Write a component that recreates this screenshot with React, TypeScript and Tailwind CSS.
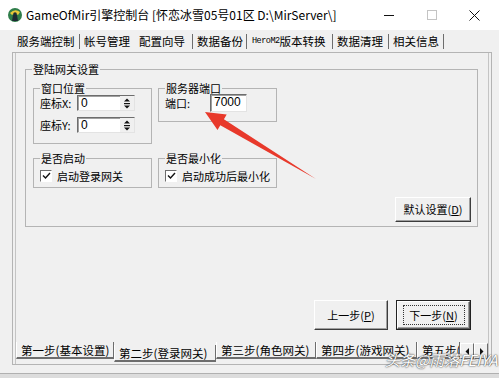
import React from "react";

const topTabs = [
  { label: "服务端控制", cls: "ml-[17px] w-[55px]", sep: "ml-[7px]" },
  { label: "帐号管理", cls: "ml-[4px] w-[44px]", sep: "ml-[5px] opacity-0" },
  { label: "配置向导", cls: "ml-[5px] w-[49px]", sep: "ml-[4px]" },
  { label: "数据备份", cls: "ml-[4px] w-[44px]", sep: "ml-[5px]" },
  { label: "版本转换", pre: "HeroM2", cls: "ml-[5px] w-[76px]", sep: "ml-[4px]" },
  { label: "数据清理", cls: "ml-[4px] w-[45px]", sep: "ml-[6px]" },
  { label: "相关信息", cls: "ml-[4px] w-[45px]", sep: "ml-[5px]" },
];

const stepTabs = [
  { label: "第一步(基本设置)", cls: "w-[98px]", active: false },
  { label: "第二步(登录网关)", cls: "w-[102px]", active: true },
  { label: "第三步(角色网关)", cls: "w-[100px]", active: false },
  { label: "第四步(游戏网关)", cls: "w-[101px]", active: false },
  { label: "第五步(", cls: "w-[43px]", active: false },
];

function GroupBox({
  title,
  className,
  children,
}: {
  title: string;
  className: string;
  children?: React.ReactNode;
}) {
  return (
    <fieldset className={`border border-[#b4b4b4] ${className}`}>
      <legend className="ml-[6px] px-[1px] leading-[14px]">{title}</legend>
      {children}
    </fieldset>
  );
}

function Spinner() {
  return (
    <div className="ml-auto flex h-full w-[14px] items-center justify-center bg-[#f0f0f0]">
      <svg width="10" height="13" viewBox="0 0 10 13">
        <path d="M2 4.5 L5 1.5 L8 4.5 Z" fill="#111" />
        <rect x="2" y="6" width="6" height="1.2" fill="#111" />
        <path d="M2 8.5 L8 8.5 L5 11.5 Z" fill="#111" />
      </svg>
    </div>
  );
}

function Edit({ value, className, spin }: { value: string; className: string; spin?: boolean }) {
  return (
    <div
      className={`flex items-stretch border border-t-[#6d6d6d] border-l-[#6d6d6d] border-r-[#e3e3e3] border-b-[#e3e3e3] bg-white shadow-[inset_1px_1px_0_#a0a0a0] ${className}`}
    >
      <span className="pl-[3px] text-[12px] leading-[15px] font-['Liberation_Sans',sans-serif]">{value}</span>
      {spin && <Spinner />}
    </div>
  );
}

function CheckRow({ label }: { label: string }) {
  return (
    <div className="ml-[6px] mt-[4px] flex h-[13px] items-center gap-[5px]">
      <div className="flex h-[12px] w-[12px] items-center justify-center border border-t-[#6d6d6d] border-l-[#6d6d6d] border-r-white border-b-white bg-white">
        <svg width="9" height="8" viewBox="0 0 9 8">
          <path d="M1 3.5 L3.5 6 L8 1" fill="none" stroke="#111" strokeWidth="1.4" />
        </svg>
      </div>
      <span className="leading-[14px]">{label}</span>
    </div>
  );
}

function WinButton({
  children,
  className,
  isDefault,
}: {
  children: React.ReactNode;
  className: string;
  isDefault?: boolean;
}) {
  if (isDefault) {
    return (
      <div className={`border border-[#222] ${className}`}>
        <div className="flex h-full w-full items-center justify-center border border-t-white border-l-white border-r-[#5a5a5a] border-b-[#5a5a5a] shadow-[inset_-1px_-1px_0_#a0a0a0]">
          <div className="flex h-[20px] w-[62px] items-center justify-center border border-dotted border-[#333]">
            {children}
          </div>
        </div>
      </div>
    );
  }
  return (
    <div
      className={`flex items-center justify-center border border-t-white border-l-white border-r-[#3c3c3c] border-b-[#3c3c3c] shadow-[inset_-1px_-1px_0_#a0a0a0] ${className}`}
    >
      {children}
    </div>
  );
}

export default function App() {
  return (
    <div className="relative h-[378px] w-[499px] overflow-hidden bg-[#f0f0f0] text-[11px] text-black font-['Noto_Sans_CJK_SC','Noto_Sans',sans-serif]">
      {/* title bar */}
      <div className="flex h-[30px] items-center bg-white">
        <svg className="ml-[7px]" width="16" height="16" viewBox="0 0 16 16">
          <circle cx="8" cy="8" r="7" fill="#2f7d4a" />
          <path d="M3 6 Q8 1 13 5 L11 8 Q8 5 5 8 Z" fill="#e9c93a" />
          <path d="M6 8 L10 8 L11 14 L5 14 Z" fill="#1d2a33" />
          <circle cx="8" cy="7" r="1.8" fill="#1d2a33" />
        </svg>
        <span className="ml-[3px] text-[12px] leading-[16px]">
          GameOfMir引擎控制台 [怀恋冰雪05号01区 D:\MirServer\]
        </span>
        <div className="flex-1" />
        <div className="flex h-full w-[43px] items-center justify-center">
          <svg width="10" height="10" viewBox="0 0 10 10">
            <rect x="0" y="5" width="10" height="1" fill="#111" />
          </svg>
        </div>
        <div className="flex h-full w-[43px] items-center justify-center">
          <svg width="10" height="10" viewBox="0 0 10 10">
            <rect x="0.5" y="0.5" width="9" height="9" fill="none" stroke="#c4c4c4" />
          </svg>
        </div>
        <div className="mr-[3px] flex h-full w-[43px] items-center justify-center">
          <svg width="11" height="11" viewBox="0 0 11 11">
            <path d="M0.5 0.5 L10.5 10.5 M10.5 0.5 L0.5 10.5" stroke="#111" strokeWidth="1" />
          </svg>
        </div>
      </div>

      {/* top tabs */}
      <div className="flex h-[22px] items-center text-[11.5px]">
        {topTabs.map((t) => (
          <React.Fragment key={t.label}>
            <span className={`flex items-center whitespace-nowrap leading-[16px] ${t.cls}`}>
              {t.pre && (
                <span className="text-[8.5px] font-['Liberation_Mono',monospace] tracking-[-0.5px]">{t.pre}</span>
              )}
              {t.label}
            </span>
            <span className={`h-[15px] w-[1px] bg-[#6d6d6d] ${t.sep}`} />
          </React.Fragment>
        ))}
      </div>

      {/* sheet */}
      <div className="ml-[12px] flex h-[313px] w-[480px] border border-[#b4b4b4]">
        <div className="ml-[2px] mr-[2px] flex flex-1 flex-col border-l border-r border-[#c4c4c4]">
          <GroupBox title="登陆网关设置" className="ml-[9px] mt-[9px] h-[165px] w-[453px]">
            <div className="mt-[5px] grid grid-cols-[119px_119px] items-start gap-x-[6px] gap-y-[7px] pl-[7px]">
              <GroupBox title="窗口位置" className="h-[63px]">
                <div className="flex h-[16px] items-center pl-[6px]">
                  <span className="w-[37px] leading-[14px]">座标X:</span>
                  <Edit value="0" className="h-[16px] w-[58px]" spin />
                </div>
                <div className="mt-[6px] flex h-[16px] items-center pl-[6px]">
                  <span className="w-[37px] leading-[14px]">座标Y:</span>
                  <Edit value="0" className="h-[16px] w-[58px]" spin />
                </div>
              </GroupBox>
              <GroupBox title="服务器端口" className="h-[41px]">
                <div className="-mt-[1px] flex h-[18px] items-center pl-[6px]">
                  <span className="w-[45px] leading-[14px]">端口:</span>
                  <Edit value="7000" className="h-[18px] w-[37px]" />
                </div>
              </GroupBox>
              <GroupBox title="是否启动" className="h-[37px]">
                <CheckRow label="启动登录网关" />
              </GroupBox>
              <GroupBox title="是否最小化" className="h-[37px]">
                <CheckRow label="启动成功后最小化" />
              </GroupBox>
            </div>
            <div className="mr-[6px] mt-[9px] flex justify-end">
              <WinButton className="h-[25px] w-[76px]">
                <span>
                  默认设置(<span className="underline">D</span>)
                </span>
              </WinButton>
            </div>
          </GroupBox>

          {/* step buttons */}
          <div className="mr-[17px] mt-[73px] flex justify-end gap-[8px]">
            <WinButton className="h-[30px] w-[74px]">
              <span>
                上一步(<span className="underline">P</span>)
              </span>
            </WinButton>
            <WinButton className="h-[30px] w-[75px]" isDefault>
              <span>
                下一步(<span className="underline">N</span>)
              </span>
            </WinButton>
          </div>

          {/* bottom tabs */}
          <div className="mt-[12px] flex h-[21px] items-start text-[11.5px]">
            {stepTabs.map((t) => (
              <div
                key={t.label}
                className={`flex shrink-0 items-center overflow-hidden whitespace-nowrap border-l border-r border-b-2 border-l-white border-r-[#6d6d6d] border-b-[#6d6d6d] pl-[4px] ${t.cls} ${
                  t.active ? "mt-[3px] h-[17px]" : "h-[17px]"
                }`}
              >
                <span className="leading-[14px]">{t.label}</span>
              </div>
            ))}
            <div className="ml-auto mt-[1px] flex h-[16px] w-[28px]">
              <div className="flex h-full w-[14px] items-center justify-center border border-t-white border-l-white border-r-[#6d6d6d] border-b-[#6d6d6d]">
                <svg width="5" height="7" viewBox="0 0 5 7">
                  <path d="M4 0 L4 7 L0.5 3.5 Z" fill="#111" />
                </svg>
              </div>
              <div className="flex h-full w-[14px] items-center justify-center border border-t-white border-l-white border-r-[#6d6d6d] border-b-[#6d6d6d]">
                <svg width="5" height="7" viewBox="0 0 5 7">
                  <path d="M1 0 L1 7 L4.5 3.5 Z" fill="#111" />
                </svg>
              </div>
            </div>
          </div>
        </div>
      </div>
      <div className="mt-[8px] h-[6px] border-t border-[#b0b0b0] bg-[#dcdcdc]" />

      {/* red arrow */}
      <svg className="pointer-events-none absolute left-0 top-0" width="499" height="378">
        <polygon
          points="205,112 226.7,114.6 223.9,119.3 316,179 220.3,125.3 217.5,130"
          fill="#e8392b"
        />
      </svg>

      {/* watermark */}
      <div className="pointer-events-none absolute left-[385px] top-[350px] text-[15px] italic leading-[20px] text-white [text-shadow:0_0_2px_#555,0_0_1px_#333]">
        头条@雨落FEIYA
      </div>
    </div>
  );
}
